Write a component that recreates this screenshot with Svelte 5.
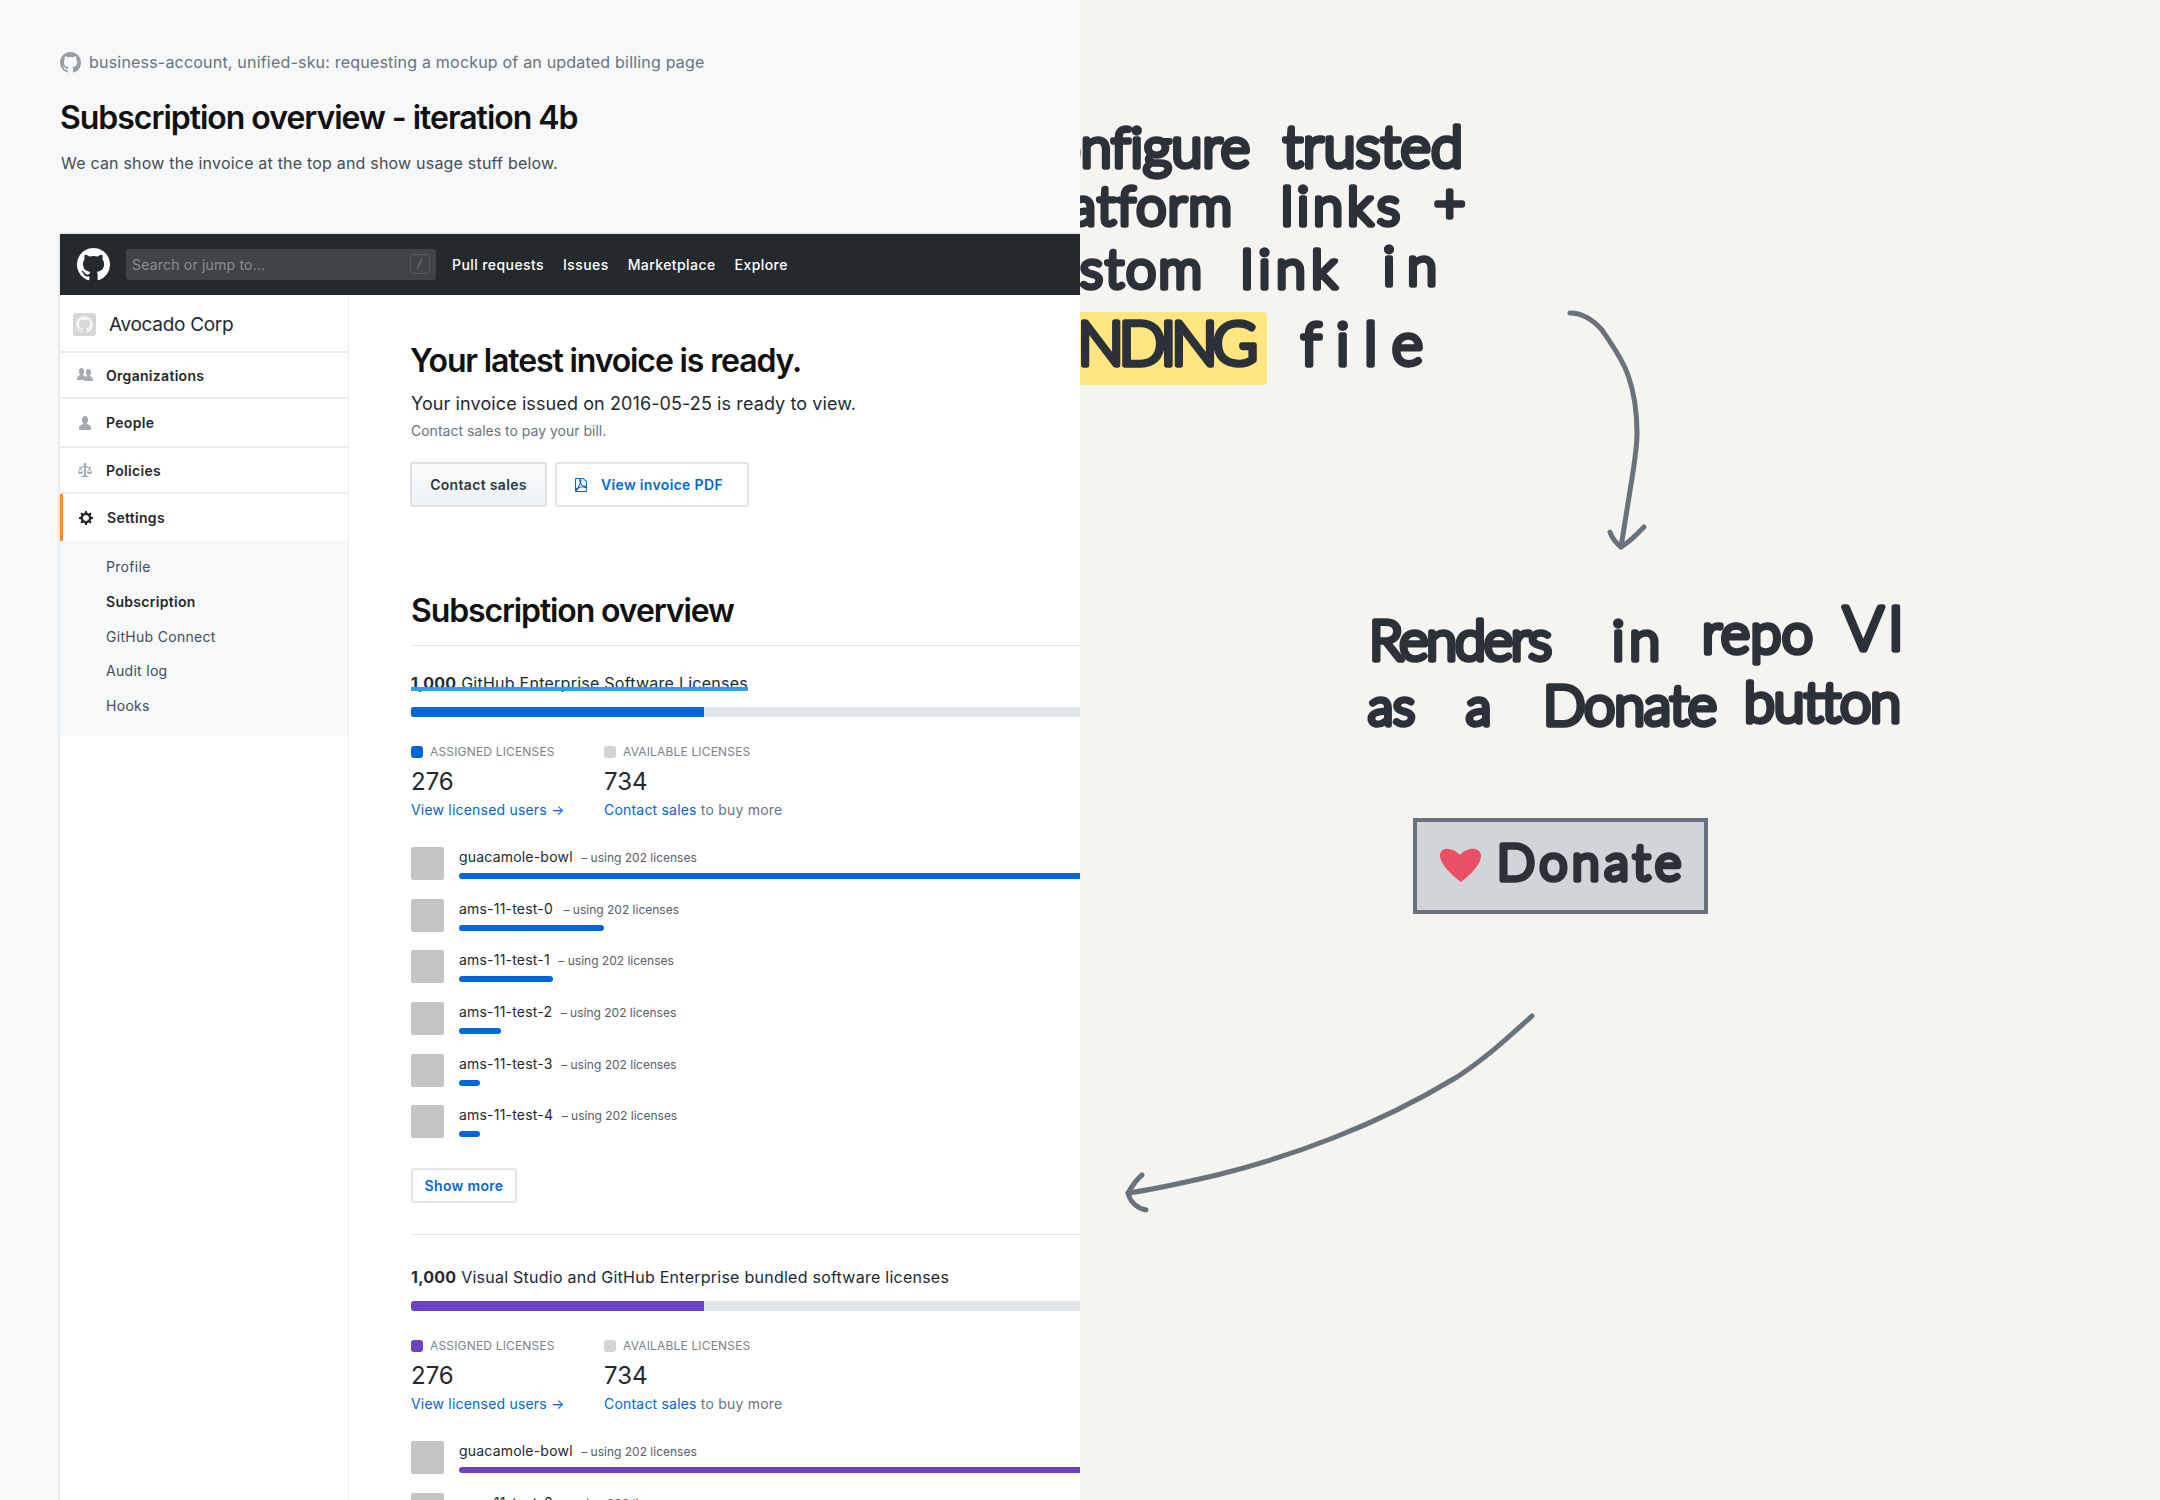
<script>
  const mark = 'M8 0C3.58 0 0 3.58 0 8c0 3.54 2.29 6.53 5.47 7.59.4.07.55-.17.55-.38 0-.19-.01-.82-.01-1.49-2.01.37-2.53-.49-2.69-.94-.09-.23-.48-.94-.82-1.13-.28-.15-.68-.52-.01-.53.63-.01 1.08.58 1.23.82.72 1.21 1.87.87 2.33.66.07-.52.28-.87.51-1.07-1.78-.2-3.64-.89-3.64-3.95 0-.87.31-1.59.82-2.15-.08-.2-.36-1.02.08-2.12 0 0 .67-.21 2.2.82.64-.18 1.32-.27 2-.27.68 0 1.36.09 2 .27 1.53-1.04 2.2-.82 2.2-.82.44 1.1.16 1.92.08 2.12.51.56.82 1.27.82 2.15 0 3.07-1.87 3.75-3.65 3.95.29.25.54.73.54 1.48 0 1.07-.01 1.93-.01 2.2 0 .21.15.46.55.38A8.013 8.013 0 0016 8c0-4.42-3.58-8-8-8z'

  const sideItems = [
    { label: 'Organizations', h: 46, vb: '0 0 16 16', w: 16, d: 'M16 12.999c0 .439-.45 1-1 1H7.995c-.539 0-.994-.447-.995-.999H1c-.54 0-1-.561-1-1 0-2.634 3-4 3-4s.229-.409 0-1c-.841-.621-1.058-.59-1-3 .058-2.419 1.367-3 2.5-3s2.442.58 2.5 3c.058 2.41-.159 2.379-1 3-.229.59 0 1 0 1s1.549.711 2.42 2.088C9.196 9.369 10 8.999 10 8.999s.229-.409 0-1c-.841-.62-1.058-.59-1-3 .058-2.419 1.367-3 2.5-3s2.437.581 2.495 3c.059 2.41-.158 2.38-1 3-.229.59 0 1 0 1s3.005 1.366 3.005 4z' },
    { label: 'People', h: 49, vb: '0 0 12 16', w: 12, d: 'M12 14.002a.998.998 0 01-.998.998H1.001A1 1 0 010 13.999V13c0-2.633 4-4 4-4s.229-.409 0-1c-.841-.62-.944-1.59-1-4 .173-2.413 1.867-3 3-3s2.827.586 3 3c-.056 2.41-.159 3.38-1 4-.229.59 0 1 0 1s4 1.367 4 4v1.002z' },
    { label: 'Policies', h: 46, vb: '0 0 14 16', w: 14, d: 'M7 4c-.83 0-1.5-.67-1.5-1.5S6.17 1 7 1s1.5.67 1.5 1.5S7.83 4 7 4zm7 6c0 1.11-.89 2-2 2h-1c-1.11 0-2-.89-2-2l2-4h-1c-.55 0-1-.45-1-1H8v8c.42 0 1 .45 1 1h1c.42 0 1 .45 1 1H3c0-.55.58-1 1-1h1c0-.55.58-1 1-1h.03L6 5H5c0 .55-.45 1-1 1H3l2 4c0 1.11-.89 2-2 2H2c-1.11 0-2-.89-2-2l2-4H1V5h3c0-.55.45-1 1-1h4c.55 0 1 .45 1 1h3v1h-1l2 4zM2.5 7L1 10h3L2.5 7zM13 10l-1.5-3-1.5 3h3z' },
    { label: 'Settings', h: 47, vb: '0 0 14 16', w: 14, active: true, d: 'M14 8.77v-1.6l-1.94-.64-.45-1.09.88-1.84-1.13-1.13-1.81.91-1.09-.45-.69-1.92h-1.6l-.63 1.94-1.11.45-1.84-.88-1.13 1.13.91 1.81-.45 1.09L0 7.23v1.59l1.94.64.45 1.09-.88 1.84 1.13 1.13 1.81-.91 1.09.45.69 1.92h1.59l.63-1.94 1.11-.45 1.84.88 1.13-1.13-.92-1.81.47-1.09L14 8.75v.02zM7 11c-1.66 0-3-1.34-3-3s1.34-3 3-3 3 1.34 3 3-1.34 3-3 3z' }
  ]
  const subItems = ['Profile', 'Subscription', 'GitHub Connect', 'Audit log', 'Hooks']

  const pdf = 'M8.5 1H1a1 1 0 00-1 1v12a1 1 0 001 1h10a1 1 0 001-1V4.5L8.5 1zM1 2h4a.68.68 0 00-.31.2 1.08 1.08 0 00-.23.47 4.22 4.22 0 00-.09 1.47c.06.609.173 1.211.34 1.8A21.78 21.78 0 013.6 8.6c-.5 1-.8 1.66-.91 1.84a7.16 7.16 0 00-.69.3c-.362.165-.699.38-1 .64V2zm4.42 4.8a5.65 5.65 0 001.17 2.09c.275.237.595.417.94.53-.64.09-1.23.2-1.81.33-.618.15-1.223.347-1.81.59s.22-.44.61-1.25c.383-.72.69-1.481.9-2.27l.001-.02zM11 14H1.5a.74.74 0 01-.17 0 2.12 2.12 0 00.73-.44 10.14 10.14 0 001.78-2.38c.31-.13.58-.23.81-.31l.42-.14c.45-.13.94-.23 1.44-.33s1-.16 1.48-.2c.447.216.912.394 1.39.53.403.11.814.188 1.23.23h.38V14H11zm0-4.86a3.74 3.74 0 00-.64-.28 4.22 4.22 0 00-.75-.11c-.411.003-.822.03-1.23.08a3 3 0 01-1-.64 6.07 6.07 0 01-1.29-2.33c.111-.661.178-1.33.2-2 .02-.25.02-.5 0-.75a1.05 1.05 0 00-.2-.88.82.82 0 00-.61-.23H8l3 3v4.14z'

  const orgs = [
    { name: 'guacamole-bowl', width: '100%', gap: 4 },
    { name: 'ams-11-test-0', width: '145px', gap: 6 },
    { name: 'ams-11-test-1', width: '94px', gap: 4 },
    { name: 'ams-11-test-2', width: '42px', gap: 4 },
    { name: 'ams-11-test-3', width: '21px', gap: 4 },
    { name: 'ams-11-test-4', width: '21px', gap: 4 }
  ]

  const sections = [
    { title: 'GitHub Enterprise Software Licenses', rows: orgs, more: true, marked: true },
    { title: 'Visual Studio and GitHub Enterprise bundled software licenses', rows: orgs.slice(0, 2), purple: true }
  ]

  // handwriting: word, left, width, baseline, size
  const words = [
    ['Configure', 1012, 238, 167, 56],
    ['trusted', 1283, 180, 167, 58],
    ['platform', 1025, 207, 225, 54],
    ['links', 1281, 119, 225, 54],
    ['+', 1434, 34, 222, 54],
    ['custom', 1020, 182, 288, 54],
    ['link', 1241, 96, 288, 54],
    ['in', 1383, 54, 285, 54],
    ['FUNDING', 1008, 250, 365, 62],
    ['file', 1301, 122, 365, 60],
    ['Renders', 1369, 183, 660, 56],
    ['in', 1612, 48, 660, 56],
    ['repo', 1702, 111, 653, 56],
    ['VI', 1843, 61, 650, 62],
    ['as', 1368, 47, 725, 52],
    ['a', 1466, 29, 725, 52],
    ['Donate', 1543, 174, 725, 56],
    ['button', 1744, 157, 722, 56],
    ['Donate', 1497, 184, 880, 50]
  ]
</script>

<div class="page">
  <section class="doc">
    <div class="crumb">
      <svg class="crumb-mark" viewBox="0 0 16 16" aria-hidden="true"><path d={mark} /></svg>
      <span>business-account, unified-sku: requesting a mockup of an updated billing page</span>
    </div>
    <h1 class="doc-title">Subscription overview - iteration 4b</h1>
    <p class="doc-sub">We can show the invoice at the top and show usage stuff below.</p>

    <div class="frame">
      <header class="topbar">
        <svg class="logo" viewBox="0 0 16 16" aria-hidden="true"><path d={mark} /></svg>
        <div class="search">
          <span>Search or jump to...</span>
          <span class="slash"><i></i></span>
        </div>
        <nav class="topnav">
          <span>Pull requests</span>
          <span>Issues</span>
          <span>Marketplace</span>
          <span>Explore</span>
        </nav>
      </header>

      <div class="body">
        <aside class="side">
          <div class="org">
            <span class="org-avatar">
              <svg viewBox="0 0 16 16" aria-hidden="true"><path d={mark} /></svg>
            </span>
            Avocado Corp
          </div>
          {#each sideItems as item}
            <div class="side-item" class:active={item.active} style="height: {item.h}px">
              <span class="side-icon">
                <svg viewBox={item.vb} width={item.w} height="16" aria-hidden="true"><path d={item.d} /></svg>
              </span>
              {item.label}
            </div>
          {/each}
          <div class="submenu">
            {#each subItems as sub}
              <div class:current={sub === 'Subscription'}>{sub}</div>
            {/each}
          </div>
        </aside>

        <main class="main">
          <h2 class="big first">Your latest invoice is ready.</h2>
          <p class="issued">Your invoice issued on 2016-05-25 is ready to view.</p>
          <p class="hint">Contact sales to pay your bill.</p>
          <div class="actions">
            <button class="btn grey">Contact sales</button>
            <button class="btn plain">
              <svg viewBox="0 0 12 16" width="12" height="16" aria-hidden="true"><path d={pdf} /></svg>
              View invoice PDF
            </button>
          </div>

          <h2 class="big overview">Subscription overview</h2>

          {#each sections as s, i}
            <div class="licenses" class:purple={s.purple} class:tail={i > 0}>
              <div class="lic-title" class:marked={s.marked}><b>1,000</b> {s.title}</div>
              <div class="meter"><div class="fill"></div></div>
              <div class="stats">
                <div class="stat">
                  <div class="legend"><i class="swatch on"></i>Assigned licenses</div>
                  <div class="num">276</div>
                  <div class="note"><span class="link">View licensed users →</span></div>
                </div>
                <div class="stat">
                  <div class="legend"><i class="swatch"></i>Available licenses</div>
                  <div class="num">734</div>
                  <div class="note"><span class="link">Contact sales</span> to buy more</div>
                </div>
              </div>
              <div class="rows">
                {#each s.rows as row}
                  <div class="row">
                    <div class="avatar"></div>
                    <div class="row-body">
                      <div class="row-label">
                        <span class="row-name">{row.name}</span>
                        <span class="row-use" style="margin-left: {row.gap}px">– using 202 licenses</span>
                      </div>
                      <div class="row-bar" style="width: {row.width}"></div>
                    </div>
                  </div>
                {/each}
              </div>
              {#if s.more}
                <button class="btn more">Show more</button>
              {/if}
            </div>
          {/each}
        </main>
      </div>
    </div>
  </section>

  <section class="notes">
    <svg class="sketch" viewBox="1080 0 1080 1500" width="1080" height="1500">
      <rect x="1000" y="312" width="267" height="73" rx="4" fill="#ffe680" />
      <rect x="1415" y="820" width="291" height="92" fill="#d1d5da" stroke="#6a737d" stroke-width="4" />
      <path d="M1461 882c-8-6-21-18-21-26 0-9 11-10 20-1 6-8 21-9 21 1 0 9-12 20-20 26z" fill="#ea4f63" />
      {#each words as [text, x, w, y, size]}
        <text {x} {y} font-size={size} textLength={w}>{text}</text>
      {/each}
      <g class="arrows">
        <path d="M1570 313c14 0 24 8 32 17 10 15 20 28 26 45 6 17 9 36 9 58 0 20-5 44-8 64l-8 50" />
        <path d="M1610 532c2 6 6 11 11 15 9-5 16-13 23-20" />
        <path d="M1532 1016c-22 20-46 42-75 61-38 23-80 44-124 61-38 15-76 27-116 37-30 7-60 14-89 18" />
        <path d="M1142 1175c-6 5-10 11-14 18 2 9 9 15 18 17" />
      </g>
    </svg>
  </section>
</div>

<style>
  :global(body) {
    margin: 0;
  }

  .page {
    display: flex;
    width: 2160px;
    height: 1500px;
    overflow: hidden;
    font-family: Inter, "Noto Sans", sans-serif;
    color: #24292e;
  }

  .doc {
    width: 1080px;
    height: 1500px;
    flex: none;
    overflow: hidden;
    background: #f6f8fa;
    padding: 50px 0 0 60px;
    box-sizing: border-box;
  }

  .notes {
    width: 1080px;
    height: 1500px;
    flex: none;
    overflow: hidden;
    background: #f5f4f0;
  }

  .sketch {
    display: block;
  }

  .sketch text {
    font-family: Lato, "Noto Sans", sans-serif;
    font-weight: 300;
    font-variant-ligatures: none;
    fill: #2c3038;
    stroke: #2c3038;
    stroke-width: 5.5;
    stroke-linejoin: round;
    stroke-linecap: round;
  }

  .arrows path {
    fill: none;
    stroke: #6a737d;
    stroke-width: 5;
    stroke-linecap: round;
    stroke-linejoin: round;
  }

  .crumb {
    display: flex;
    align-items: center;
    gap: 8px;
    height: 24px;
    font-size: 16px;
    letter-spacing: 0.2px;
    color: #6a737d;
  }

  .crumb-mark {
    width: 21px;
    height: 21px;
    fill: #959da5;
    flex: none;
  }

  .doc-title {
    margin: 24px 0 0;
    font-size: 32px;
    line-height: 40px;
    font-weight: 600;
    letter-spacing: -1.03px;
    color: #111;
  }

  .doc-sub {
    margin: 13px 0 0 1px;
    font-size: 16px;
    line-height: 24px;
    letter-spacing: 0.2px;
    color: #444d56;
  }

  .frame {
    width: 1400px;
    margin-top: 59px;
    background: #fff;
    box-shadow: 0 0 3px rgba(27, 31, 35, 0.2);
  }

  .topbar {
    display: flex;
    align-items: center;
    height: 61px;
    background: #24292e;
    padding-bottom: 1px;
    box-sizing: border-box;
  }

  .logo {
    width: 33px;
    height: 33px;
    fill: #fff;
    margin-left: 17px;
    flex: none;
  }

  .search {
    display: flex;
    align-items: center;
    justify-content: space-between;
    width: 310px;
    height: 31px;
    margin-left: 16px;
    padding: 0 6px;
    box-sizing: border-box;
    background: #3f4448;
    border-radius: 3px;
    font-size: 14px;
    letter-spacing: 0.2px;
    color: #8a8f94;
  }

  .slash {
    position: relative;
    width: 20px;
    height: 20px;
    border: 1px solid #555a5f;
    border-radius: 3px;
    box-sizing: border-box;
  }

  .slash i {
    position: absolute;
    left: 8px;
    top: 4px;
    width: 1px;
    height: 10px;
    background: #6a7075;
    transform: rotate(25deg);
  }

  .topnav {
    display: flex;
    gap: 19px;
    margin-left: 16px;
    font-size: 14px;
    font-weight: 500;
    letter-spacing: 0.42px;
    color: #fff;
  }

  .body {
    display: flex;
    align-items: stretch;
  }

  .side {
    width: 288px;
    flex: none;
    border-right: 1px solid #e9ebee;
    padding-bottom: 300px;
  }

  .org {
    display: flex;
    align-items: center;
    gap: 13px;
    height: 53px;
    padding-top: 3px;
    padding-left: 13px;
    border-bottom: 2px solid #eaecef;
    font-size: 19px;
    letter-spacing: -0.3px;
    color: #24292e;
  }

  .org-avatar {
    display: flex;
    align-items: center;
    justify-content: center;
    width: 23px;
    height: 23px;
    background: #d5d7d9;
    border-radius: 3px;
  }

  .org-avatar svg {
    width: 17px;
    height: 17px;
    fill: #f2f3f4;
  }

  .side-item {
    display: flex;
    align-items: center;
    box-sizing: border-box;
    padding-left: 17px;
    border-bottom: 2px solid #eaecef;
    font-size: 14px;
    font-weight: 600;
    letter-spacing: 0.3px;
  }

  .side-icon {
    display: flex;
    justify-content: center;
    width: 16px;
    margin-right: 13px;
  }

  .side-icon svg {
    fill: #a3aab1;
  }

  .side-item.active {
    border-bottom: 0;
    border-left: 3px solid #f9873a;
    padding-left: 15px;
  }

  .side-item.active svg {
    fill: #24292e;
  }

  .submenu {
    display: flex;
    flex-direction: column;
    gap: 14.75px;
    background: #f6f8fa;
    height: 195px;
    box-sizing: border-box;
    padding: 16px 0 0 46px;
    font-size: 14px;
    line-height: 20px;
    letter-spacing: 0.3px;
    color: #444d56;
  }

  .submenu .current {
    font-weight: 600;
    color: #24292e;
  }

  .main {
    flex: 1;
    padding: 46px 0 0 62px;
  }

  .big {
    margin: 0;
    font-size: 32px;
    line-height: 40px;
    font-weight: 600;
    letter-spacing: -1.13px;
    color: #111;
  }

  .first {
    margin-left: -1px;
  }

  .issued {
    margin: 9px 0 0;
    font-size: 18px;
    line-height: 28px;
    letter-spacing: 0.1px;
    color: #24292e;
  }

  .hint {
    margin: 3px 0 0;
    font-size: 14px;
    line-height: 20px;
    color: #6a737d;
  }

  .actions {
    display: flex;
    gap: 8px;
    margin-top: 21px;
    margin-left: -1px;
  }

  .btn {
    box-sizing: border-box;
    font-family: inherit;
    font-size: 14px;
    font-weight: 600;
    letter-spacing: 0.33px;
    border-radius: 3px;
    border: 2px solid #e1e4e8;
    background: #fff;
  }

  .grey {
    width: 137px;
    height: 45px;
    color: #2f363d;
    background: linear-gradient(#f9fafb, #eff3f6);
    border-color: #dcdfe3;
  }

  .plain {
    display: flex;
    align-items: center;
    gap: 14px;
    width: 194px;
    height: 45px;
    padding-left: 18px;
    color: #0366d6;
  }

  .plain svg {
    fill: #0366d6;
  }

  .overview {
    margin-top: 84px;
    padding-bottom: 14px;
    border-bottom: 1px solid #e1e4e8;
  }

  .licenses {
    padding-top: 25px;
  }

  .licenses.tail {
    margin-top: 31px;
    padding-top: 30px;
    border-top: 1px solid #e1e4e8;
  }

  .lic-title {
    display: inline-block;
    position: relative;
    vertical-align: top;
    font-size: 16px;
    line-height: 24px;
    letter-spacing: 0.25px;
    color: #24292e;
  }

  .lic-title b {
    font-weight: 700;
  }

  .marked::after {
    content: "";
    position: absolute;
    left: 0;
    right: 0;
    top: 16px;
    height: 4px;
    background: #29a3ee;
  }

  .meter {
    height: 10px;
    margin-top: 12px;
    background: #e1e4e8;
    border-radius: 3px;
    overflow: hidden;
  }

  .fill {
    width: 293px;
    height: 100%;
    background: #0366d6;
  }

  .stats {
    display: flex;
    margin-top: 27px;
  }

  .stat {
    width: 193px;
  }

  .legend {
    display: flex;
    align-items: center;
    gap: 7px;
    font-size: 12px;
    line-height: 16px;
    letter-spacing: 0.17px;
    text-transform: uppercase;
    color: #7b838b;
  }

  .swatch {
    width: 12px;
    height: 12px;
    border-radius: 3px;
    background: #d1d5da;
  }

  .swatch.on {
    background: #0366d6;
  }

  .num {
    margin-top: 6px;
    font-size: 24px;
    line-height: 32px;
    color: #24292e;
  }

  .note {
    margin-top: 2px;
    font-size: 14px;
    line-height: 20px;
    letter-spacing: 0.2px;
    color: #6a737d;
  }

  .link {
    color: #0366d6;
  }

  .rows {
    display: flex;
    flex-direction: column;
    gap: 18.67px;
    margin-top: 27px;
  }

  .row {
    display: flex;
    gap: 15px;
  }

  .avatar {
    width: 33px;
    height: 33px;
    flex: none;
    background: #c4c4c4;
    border-radius: 2px;
  }

  .row-body {
    flex: 1;
  }

  .row-label {
    line-height: 18px;
    height: 18px;
  }

  .row-name {
    font-size: 14px;
    letter-spacing: 0.2px;
    color: #24292e;
  }

  .row-use {
    font-size: 12px;
    color: #586069;
  }

  .row-bar {
    height: 6px;
    margin-top: 8px;
    background: #0366d6;
    border-radius: 3px;
  }

  .more {
    display: block;
    width: 106px;
    height: 35px;
    margin-top: 30px;
    color: #0366d6;
  }

  .purple .fill,
  .purple .swatch.on,
  .purple .row-bar {
    background: #6f42c1;
  }
</style>
